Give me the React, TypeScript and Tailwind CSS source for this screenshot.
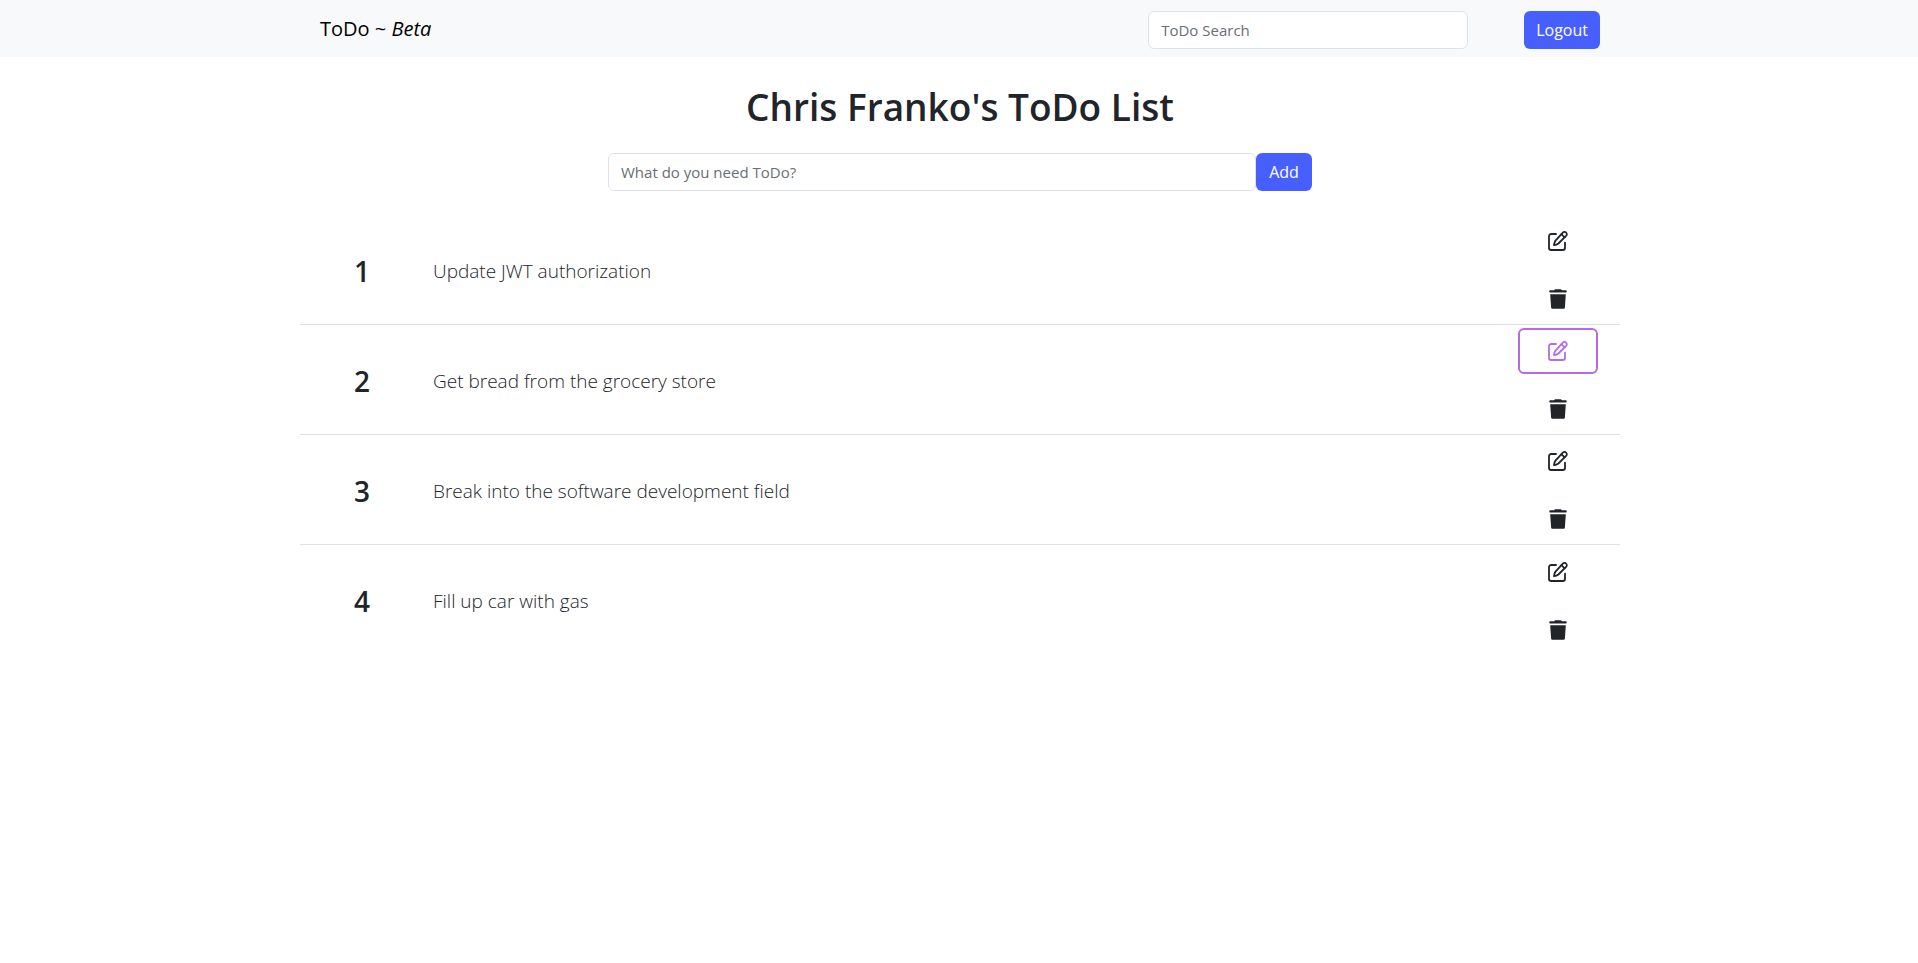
const todos = [
  { id: 1, text: "Update JWT authorization" },
  { id: 2, text: "Get bread from the grocery store", active: true },
  { id: 3, text: "Break into the software development field" },
  { id: 4, text: "Fill up car with gas" },
];

const field =
  "h-[38px] border border-[#dee2e6] bg-white px-3 text-[15px] text-[#212529] placeholder:text-[#6a6e73] placeholder:opacity-100 outline-none";
const primary =
  "h-[38px] shrink-0 rounded-md bg-[#485fff] px-3 text-base text-white";
const iconButton =
  "flex h-[46px] w-20 items-center justify-center rounded-md border-2";

function EditIcon() {
  return (
    <svg
      width="20"
      height="20"
      viewBox="0 0 20 20"
      fill="none"
      stroke="currentColor"
      strokeWidth="1.8"
      strokeLinecap="round"
      strokeLinejoin="round"
      aria-hidden="true"
    >
      <path d="M8 3H3.300A2.300 2.300 0 0 0 1 5.300v11.400A2.300 2.300 0 0 0 3.300 19h11.400a2.300 2.300 0 0 0 2.300-2.300v-5" />
      <path d="M14.600 1.800a2.250 2.250 0 0 1 3.700 2.800L10.400 12.500C9.200 13.400 7.600 14 6 14.100c.1-1.600.6-3.300 1.500-4.500z" />
      <path d="M13.400 3.200l3.200 3.100" />
    </svg>
  );
}

function TrashIcon() {
  return (
    <svg width="18" height="20" viewBox="0 0 18 20" fill="currentColor" aria-hidden="true">
      <path d="M5.200 1.300C5.500.500 6 .200 6.700.200h4.600c.7 0 1.200.3 1.500 1.100h4.100c.5 0 .8.3.8.700v.7c0 .4-.3.700-.8.700H1.100c-.5 0-.8-.3-.8-.7V2c0-.4.3-.7.8-.7z" />
      <path d="M1.200 5.200h15.600l-.9 13.300c-.1.800-.6 1.300-1.400 1.300h-11c-.8 0-1.300-.5-1.400-1.300z" />
    </svg>
  );
}

function Navbar() {
  return (
    <nav className="bg-[#f8f9fb] pt-[11px] pb-2">
      <div className="mx-auto flex max-w-[1322px] items-center pr-5 pl-[22px]">
        <a href="#" className="mr-auto pb-0.5 text-[20px] leading-8 text-black">
          ToDo ~ <em>Beta</em>
        </a>
        <input
          type="search"
          aria-label="ToDo Search"
          placeholder="ToDo Search"
          className={`${field} w-80 rounded-md`}
        />
        <button type="button" className={`${primary} ml-14`}>
          Logout
        </button>
      </div>
    </nav>
  );
}

function AddForm() {
  return (
    <form
      className="mx-auto flex w-full max-w-[704px]"
      onSubmit={(e) => e.preventDefault()}
    >
      <input
        type="text"
        aria-label="New ToDo"
        placeholder="What do you need ToDo?"
        className={`${field} min-w-0 flex-1 rounded-md`}
      />
      <button type="submit" className={`${primary} w-14`}>
        Add
      </button>
    </form>
  );
}

export default function App() {
  return (
    <div className="font-['Open_Sans','Noto_Sans',sans-serif] text-[#212529]">
      <Navbar />
      <main className="mx-auto max-w-[1322px] pl-0.5">
        <h1 className="pt-[26px] pb-[22px] text-center text-[37px] leading-[48px] font-semibold">
          Chris Franko's ToDo List
        </h1>
        <AddForm />
        <ol className="mt-6 divide-y divide-[#dee2e6]">
          {todos.map((todo) => (
            <li key={todo.id} className="flex h-[110px] items-center pt-px pr-[22px]">
              <span className="w-[124px] pt-px text-center text-[28px] font-semibold">
                {todo.id}
              </span>
              <span className="ml-[9px] flex-1 pt-0.5 text-[19px] font-light">{todo.text}</span>
              <div className="flex flex-col gap-3">
                <button
                  type="button"
                  aria-label={`Edit ToDo ${todo.id}`}
                  className={`${iconButton} ${
                    todo.active ? "border-[#b76ae6] text-[#b76ae6]" : "border-transparent"
                  }`}
                >
                  <EditIcon />
                </button>
                <button
                  type="button"
                  aria-label={`Delete ToDo ${todo.id}`}
                  className={`${iconButton} border-transparent`}
                >
                  <TrashIcon />
                </button>
              </div>
            </li>
          ))}
        </ol>
      </main>
    </div>
  );
}
